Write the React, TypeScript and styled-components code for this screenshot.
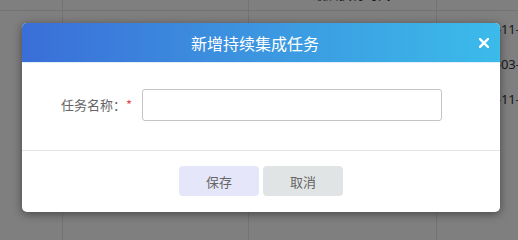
import React from "react";
import styled, { createGlobalStyle } from "styled-components";

const Global = createGlobalStyle`
  html, body { margin: 0; padding: 0; }
  html { background: #fff; }
  body {
    width: 518px; min-height: 100vh; overflow: hidden; background: #fff;
    font-family: "Noto Sans CJK SC", "Liberation Sans", sans-serif;
  }
`;

const Page = styled.div`
  position: relative;
  width: 518px;
  height: 100vh;
  min-height: 221px;
  overflow: hidden;
  background: #fff;
`;

const Table = styled.div`
  display: grid;
  grid-template-columns: 62px 186px 188px 1fr;
  grid-auto-rows: 35px;
  transform: translateY(-24px);
`;

const Cell = styled.div<{ $head?: boolean; $pad: number }>`
  border-left: 1px solid #e6e6e6;
  border-bottom: ${(p) => (p.$head ? "1px solid #e6e6e6" : "none")};
  display: flex;
  align-items: center;
  padding-left: ${(p) => p.$pad}px;
  font-family: "Noto Sans", "Noto Sans CJK SC", sans-serif;
  font-size: 13px;
  color: #333;
  white-space: nowrap;
  overflow: hidden;
  box-sizing: border-box;
  &:nth-child(4n + 1) { border-left: none; }
`;

const Overlay = styled.div`
  position: absolute;
  inset: 0;
  background: rgba(0, 0, 0, 0.5);
`;

const Dialog = styled.div`
  position: absolute;
  left: 22px;
  top: 23px;
  width: 478px;
  height: 189px;
  background: #fff;
  border-radius: 5px;
  box-shadow: 0 2px 10px rgba(0, 0, 0, 0.45);
  display: flex;
  flex-direction: column;
  overflow: hidden;
`;

const Header = styled.div`
  height: 40px;
  flex: none;
  background: linear-gradient(90deg, #3a6ed8 0%, #3c96e0 50%, #3bbbea 100%);
  display: flex;
  align-items: center;
  justify-content: center;
  position: relative;
  border-bottom: 1px solid #e3eefb;
  box-sizing: border-box;
`;

const Title = styled.div`
  color: #fff;
  font-size: 16px;
  margin-right: 12px;
`;

const Close = styled.div`
  position: absolute;
  right: 11px;
  top: 15px;
  width: 10px;
  height: 10px;
  display: flex;
`;

const Body = styled.div`
  height: 88px;
  flex: none;
  display: flex;
  align-items: flex-start;
  padding-top: 26px;
  box-sizing: border-box;
  border-bottom: 1px solid #e4e4e4;
`;

const Label = styled.div`
  width: 120px;
  flex: none;
  text-align: right;
  font-size: 13px;
  color: #666;
  line-height: 32px;
  padding-right: 10px;
  box-sizing: border-box;
`;

const Star = styled.span`
  color: #e24a4a;
`;

const Input = styled.input`
  width: 300px;
  height: 32px;
  box-sizing: border-box;
  border: 1px solid #c4c4c4;
  border-radius: 3px;
  outline: none;
  padding: 0 8px;
  font-size: 13px;
`;

const Footer = styled.div`
  flex: 1;
  display: flex;
  justify-content: center;
  align-items: flex-start;
  padding-top: 15px;
  gap: 4px;
  box-sizing: border-box;
`;

const Button = styled.button<{ $variant: "save" | "cancel" }>`
  width: 80px;
  height: 30px;
  border: none;
  border-radius: 4px;
  background: ${(p) => (p.$variant === "save" ? "#e6e6fa" : "#e1e4e4")};
  color: #666;
  font-size: 13px;
  font-family: inherit;
  padding: 0;
  cursor: pointer;
`;

const rows = [
  ["", "", "最后执行时间", ""],
  ["", "", "", "2021-11-11"],
  ["", "", "", "2021-03-03"],
  ["", "", "", "2021-11-11"],
  ["", "", "", ""],
  ["", "", "", ""],
  ["", "", "", ""],
  ["", "", "", ""],
];

const pads = [10, 10, 64, 30];

export default function App() {
  return (
    <Page>
      <Global />
      <Table>
        {rows.map((r, i) =>
          r.map((c, j) => (
            <Cell key={`${i}-${j}`} $head={i === 0} $pad={pads[j]}>
              {c}
            </Cell>
          ))
        )}
      </Table>
      <Overlay />
      <Dialog>
        <Header>
          <Title>新增持续集成任务</Title>
          <Close>
            <svg width="10" height="10" viewBox="0 0 10 10">
              <path d="M1 1L9 9M9 1L1 9" stroke="#fff" strokeWidth="2.4" strokeLinecap="square" />
            </svg>
          </Close>
        </Header>
        <Body>
          <Label>
            任务名称：<Star>*</Star>
          </Label>
          <Input />
        </Body>
        <Footer>
          <Button $variant="save">保存</Button>
          <Button $variant="cancel">取消</Button>
        </Footer>
      </Dialog>
    </Page>
  );
}
